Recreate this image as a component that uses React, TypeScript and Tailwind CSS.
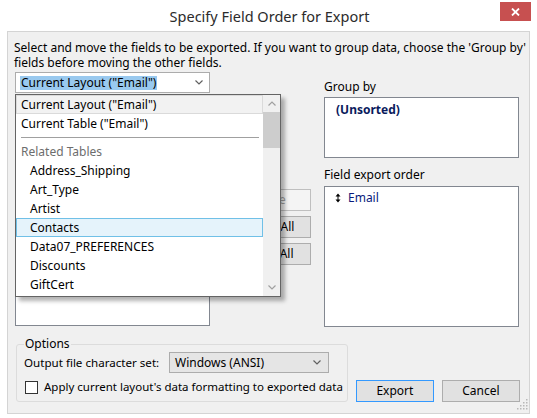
import React from "react";

const Chevron = ({ up = false, color = "#606060" }: { up?: boolean; color?: string }) => (
  <svg width="8" height="5" viewBox="0 0 8 5" className="block">
    <path d={up ? "M0.5 4.5 L4 1 L7.5 4.5" : "M0.5 0.5 L4 4 L7.5 0.5"} fill="none" stroke={color} strokeWidth="1.2" />
  </svg>
);

export default function App() {
  const related = ["Address_Shipping", "Art_Type", "Artist", "Contacts", "Data07_PREFERENCES", "Discounts", "GiftCert"];
  return (
    <div
      className="relative w-[537px] h-[418px] bg-white text-black text-[12px] leading-[14px] overflow-hidden"
      style={{ fontFamily: '"Noto Sans", "Open Sans", sans-serif' }}
    >
      {/* Title bar */}
      <div className="relative h-[31px] flex items-center justify-center">
        <div className="text-[14.5px] text-[#2b2b2b] mt-[1px] pl-[2px]">Specify Field Order for Export</div>
        <div className="absolute left-[500px] top-[2px] w-[31px] h-[19px] bg-[#c75050] flex items-center justify-center">
          <svg width="9" height="8" viewBox="0 0 9 8">
            <path d="M1 0.5 L8 7.5 M8 0.5 L1 7.5" stroke="white" strokeWidth="1.8" />
          </svg>
        </div>
      </div>

      {/* Client area */}
      <div className="relative mx-[7px] w-[523px] h-[383px] border border-[#d4d4d4] bg-[#f0f0f0]">
        <div className="pl-[6px] pt-[8px] whitespace-nowrap">
          <div className="h-[15px] leading-[15px]">
            Select and move the fields to be exported. If you want to group data, choose the 'Group by'
          </div>
          <div className="h-[15px] leading-[15px]">fields before moving the other fields.</div>
        </div>

        <div className="flex pl-[7px] mt-[2px]">
          {/* Left column */}
          <div className="w-[195px] flex flex-col">
            <div className="h-[21px] bg-white border border-[#acacac] flex items-center pl-[4px] pr-[6px]">
              <span className="bg-[#99c9ef] px-[1px] leading-[14px]">Current Layout ("Email")</span>
              <span className="flex-1" />
              <Chevron />
            </div>
            <div className="mt-[6px] h-[227px] bg-white border border-[#828790]" />
          </div>

          {/* Middle buttons */}
          <div className="ml-[20px] w-[81px] mt-[117px] flex flex-col gap-[5px]">
            <div className="h-[22px] bg-[#f4f4f4] border border-[#bfbfbf] text-[#a0a0a0] flex items-center justify-center">Move</div>
            <div className="h-[22px] bg-[#e1e1e1] border border-[#adadad] flex items-center justify-center">Move All</div>
            <div className="h-[22px] bg-[#e1e1e1] border border-[#adadad] flex items-center justify-center">Clear All</div>
          </div>

          {/* Right column */}
          <div className="ml-[13px] w-[195px] flex flex-col">
            <div className="mt-[8px]">Group by</div>
            <div className="mt-[3px] h-[61px] bg-white border border-[#828790] pl-[11px] pt-[5px]">
              <span className="font-bold text-[#0a1a5c]">(Unsorted)</span>
            </div>
            <div className="mt-[10px]">Field export order</div>
            <div className="mt-[4px] h-[141px] bg-white border border-[#828790] pl-[10px] pt-[4px] flex items-start">
              <span className="flex items-center h-[14px]">
                <svg width="6" height="10" viewBox="0 0 6 10" className="mr-[7px]">
                  <path d="M3 0.5 L5.5 3.5 H0.5 Z M3 9.5 L5.5 6.5 H0.5 Z" fill="#000" />
                  <path d="M3 3 V7" stroke="#000" strokeWidth="1" />
                </svg>
                <span className="text-[#0a1a7c]">Email</span>
              </span>
            </div>
          </div>
        </div>

        {/* Options row */}
        <div className="flex items-end mt-[10px]">
          <fieldset className="ml-[8px] w-[330px] border border-[#dcdcdc] rounded-[3px] pl-[7px] pr-[4px] pb-[7px] m-0 whitespace-nowrap">
            <legend className="px-[1px] leading-[14px]">Options</legend>
            <div className="flex items-center mt-[1px] h-[21px]">
              <span className="w-[145px] text-[11.6px]">Output file character set:</span>
              <div className="w-[160px] h-[21px] bg-[#e5e5e5] border border-[#acacac] flex items-center pl-[5px] pr-[7px]">
                <span>Windows (ANSI)</span>
                <span className="flex-1" />
                <Chevron />
              </div>
            </div>
            <div className="flex items-center mt-[7px] h-[14px]">
              <div className="ml-[1px] w-[13px] h-[13px] shrink-0 bg-white border border-[#333]" />
              <span className="ml-[6px] text-[11.5px]">Apply current layout's data formatting to exported data</span>
            </div>
          </fieldset>
          <div className="ml-[8px] w-[78px] h-[22px] bg-[#e1e1e1] border border-[#3399ff] flex items-center justify-center">Export</div>
          <div className="ml-[8px] w-[78px] h-[22px] bg-[#e1e1e1] border border-[#adadad] flex items-center justify-center">Cancel</div>
        </div>

        {/* resize grip */}
        <svg width="12" height="12" viewBox="0 0 12 12" className="absolute right-[1px] bottom-[3px]">
          {[
            [10, 1], [7, 4], [10, 4], [4, 7], [7, 7], [10, 7], [1, 10], [4, 10], [7, 10], [10, 10],
          ].map(([x, y], i) => (
            <rect key={i} x={x} y={y} width="1.5" height="1.5" fill="#b8b8b8" />
          ))}
        </svg>
      </div>

      {/* Dropdown list overlay */}
      <div className="absolute left-[15px] top-[94px] w-[266px] h-[203px] bg-white border border-[#646464] shadow-[4px_4px_4px_rgba(0,0,0,0.3)] flex">
        <div className="w-[247px] flex flex-col">
          <div className="h-[19px] bg-[#f2f2f2] border border-[#dadada] flex items-center pl-[4px]">Current Layout ("Email")</div>
          <div className="h-[19px] flex items-center pl-[5px]">Current Table ("Email")</div>
          <div className="h-[9px] flex items-center pl-[5px] pr-[4px]">
            <div className="h-[1px] w-full bg-[#a0a0a0]" />
          </div>
          <div className="h-[19px] flex items-center pl-[5px] text-[#6d6d6d]">Related Tables</div>
          {related.map((r) => (
            <div
              key={r}
              className={
                r === "Contacts"
                  ? "h-[19px] flex items-center pl-[13px] bg-[#e5f3fb] border border-[#70c0e7]"
                  : "h-[19px] flex items-center pl-[14px]"
              }
            >
              {r}
            </div>
          ))}
        </div>
        <div className="w-[17px] bg-[#f0f0f0] flex flex-col">
          <div className="h-[17px] flex items-center justify-center">
            <Chevron up color="#a0a0a0" />
          </div>
          <div className="h-[36px] bg-[#cdcdcd]" />
          <div className="flex-1" />
          <div className="h-[17px] flex items-center justify-center">
            <Chevron color="#a0a0a0" />
          </div>
        </div>
      </div>
    </div>
  );
}
